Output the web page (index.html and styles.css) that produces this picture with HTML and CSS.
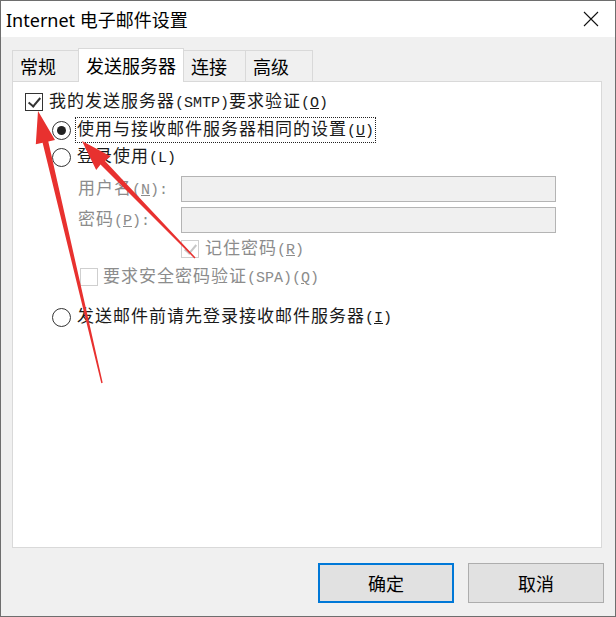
FILE: index.html
```html
<!DOCTYPE html>
<html lang="zh-CN">
<head>
    <meta charset="UTF-8">
    <title>Internet 电子邮件设置</title>
    <link rel="stylesheet" href="styles.css">
</head>
<body>
    <div class="window">
        <div class="titlebar">
            <span class="title">Internet 电子邮件设置</span>
            <svg class="close" width="16" height="16" viewBox="0 0 16 16">
                <path d="M1 1 L15 15 M15 1 L1 15" stroke="#111" stroke-width="1.1" fill="none"/>
            </svg>
        </div>

        <div class="main">
            <div class="tabs">
                <div class="tab tab-general">常规</div>
                <div class="tab tab-active">发送服务器</div>
                <div class="tab tab-conn">连接</div>
                <div class="tab tab-adv">高级</div>
            </div>

            <div class="panel">
                <div class="row row-auth">
                    <span class="check checked"></span>
                    <span class="label">我的发送服务器<span class="h">(SMTP)</span>要求验证<span class="h">(<u>O</u>)</span></span>
                </div>

                <div class="row row-same">
                    <span class="radio selected"></span>
                    <span class="label focus">使用与接收邮件服务器相同的设置<span class="h">(<u>U</u>)</span></span>
                </div>

                <div class="row row-login">
                    <span class="radio"></span>
                    <span class="label">登录使用<span class="h">(L)</span></span>
                </div>

                <div class="row field row-user">
                    <span class="label off field-label">用户名<span class="h">(<u>N</u>):</span></span>
                    <span class="input"></span>
                </div>

                <div class="row field row-pass">
                    <span class="label off field-label">密码<span class="h">(<u>P</u>):</span></span>
                    <span class="input"></span>
                </div>

                <div class="row row-remember">
                    <span class="check checked off"></span>
                    <span class="label off">记住密码<span class="h">(<u>R</u>)</span></span>
                </div>

                <div class="row row-spa">
                    <span class="check off"></span>
                    <span class="label off">要求安全密码验证<span class="h">(SPA)(<u>Q</u>)</span></span>
                </div>

                <div class="row row-before">
                    <span class="radio"></span>
                    <span class="label">发送邮件前请先登录接收邮件服务器<span class="h">(<u>I</u>)</span></span>
                </div>
            </div>

            <div class="buttons">
                <button class="btn btn-default">确定</button>
                <button class="btn">取消</button>
            </div>
        </div>

        <!-- red annotation arrows drawn over the dialog -->
        <svg class="arrows" width="616" height="617" viewBox="0 0 616 617">
            <polygon fill="#e8312f" points="38,111 55,140 48.3,141.4 102.7,382.8 101.3,383.2 42.6,142.8 35.8,144.3"/>
            <polygon fill="#e8312f" points="82,141 110.5,156.2 105,161 195.5,257.5 194.5,258.5 100.5,164.5 96.2,170"/>
        </svg>
    </div>
</body>
</html>
```

FILE: styles.css
```css
body {
    margin: 0;
    font-family: "Noto Sans CJK SC", sans-serif;
}
.window {
    position: relative;
    width: 616px;
    height: 617px;
    box-sizing: border-box;
    border: 1px solid #6e6e6e;
    background-color: #f0f0f0;
    overflow: hidden;
}
.titlebar {
    height: 36px;
    background-color: #fff;
    display: flex;
    align-items: center;
    justify-content: space-between;
    padding: 0 16px 0 5px;
}
.title {
    font-family: "Noto Sans", "Noto Sans CJK SC", sans-serif;
    font-size: 18px;
    color: #000;
}
.main {
    padding: 11px 13px 0 11px;
}
.tabs {
    display: flex;
    align-items: flex-end;
    height: 33px;
}
.tab {
    box-sizing: border-box;
    height: 31px;
    border: 1px solid #d9d9d9;
    border-bottom: none;
    margin-left: -1px;
    padding-left: 7px;
    font-size: 18px;
    line-height: 30px;
    color: #000;
    background-color: #f0f0f0;
}
.tab-general {
    width: 67px;
    margin-left: 0;
}
.tab-active {
    width: 106px;
    height: 34px;
    line-height: 32px;
    margin-bottom: -1px;
    background-color: #fff;
    position: relative;
}
.tab-conn {
    width: 63px;
}
.tab-adv {
    width: 68px;
}
.panel {
    box-sizing: border-box;
    height: 467px;
    border: 1px solid #d9d9d9;
    background-color: #fff;
    padding-left: 12px;
}
.row {
    display: flex;
    align-items: center;
    height: 20px;
}
.label {
    font-size: 17px;
    line-height: 20px;
    color: #1a1a1a;
    white-space: nowrap;
    letter-spacing: 1px;
}
.label.off {
    color: #8c8c8c;
}
.h {
    font-family: "Liberation Mono", monospace;
    font-size: 15px;
    letter-spacing: 0;
}
.focus {
    outline: 1px dotted #222;
    outline-offset: 0;
    padding: 0 1px;
}
.row-auth {
    margin-top: 10px;
}
.row-auth .label {
    margin-left: 6px;
}
.row-same {
    margin-top: 8px;
    padding-left: 27px;
}
.row-same .label {
    margin-left: 5px;
}
.row-login {
    margin-top: 7px;
    padding-left: 27px;
}
.row-login .label,
.row-before .label {
    margin-left: 6px;
}
.field {
    height: 26px;
    padding-left: 53px;
}
.row-user {
    margin-top: 9px;
}
.row-pass {
    margin-top: 5px;
}
.field-label {
    width: 115px;
    margin-left: 0;
}
.input {
    box-sizing: border-box;
    width: 375px;
    height: 26px;
    margin-left: -12px;
    background-color: #f0f0f0;
    border: 1px solid #b4b4b4;
}
.row-remember {
    margin-top: 6px;
    padding-left: 156px;
}
.row-remember .label {
    margin-left: 6px;
}
.row-spa {
    margin-top: 8px;
    padding-left: 55px;
}
.row-spa .label {
    margin-left: 5px;
}
.row-before {
    margin-top: 20px;
    padding-left: 27px;
}
.check {
    box-sizing: border-box;
    width: 18px;
    height: 18px;
    border: 1px solid #333;
    background-color: #fff;
    position: relative;
    flex-shrink: 0;
}
.check.off {
    border-color: #cfcfcf;
}
.check.checked::after {
    content: "";
    position: absolute;
    left: 5px;
    top: 1px;
    width: 5px;
    height: 10px;
    border-right: 2px solid #333;
    border-bottom: 2px solid #333;
    transform: rotate(40deg);
}
.check.checked.off::after {
    border-color: #c6c6c6;
}
.radio {
    box-sizing: border-box;
    width: 19px;
    height: 19px;
    border: 1px solid #333;
    border-radius: 50%;
    background-color: #fff;
    position: relative;
    flex-shrink: 0;
}
.radio.selected::after {
    content: "";
    position: absolute;
    left: 4px;
    top: 4px;
    width: 9px;
    height: 9px;
    border-radius: 50%;
    background-color: #222;
}
.buttons {
    display: flex;
    justify-content: flex-end;
    gap: 14px;
    margin-top: 15px;
    margin-right: -2px;
}
.btn {
    box-sizing: border-box;
    width: 136px;
    height: 40px;
    font-family: "Noto Sans CJK SC", sans-serif;
    font-size: 18px;
    color: #000;
    background-color: #e1e1e1;
    border: 1px solid #adadad;
    padding: 0;
}
.btn-default {
    border: 2px solid #0078d7;
}
.arrows {
    position: absolute;
    left: -1px;
    top: -1px;
    pointer-events: none;
}
```
